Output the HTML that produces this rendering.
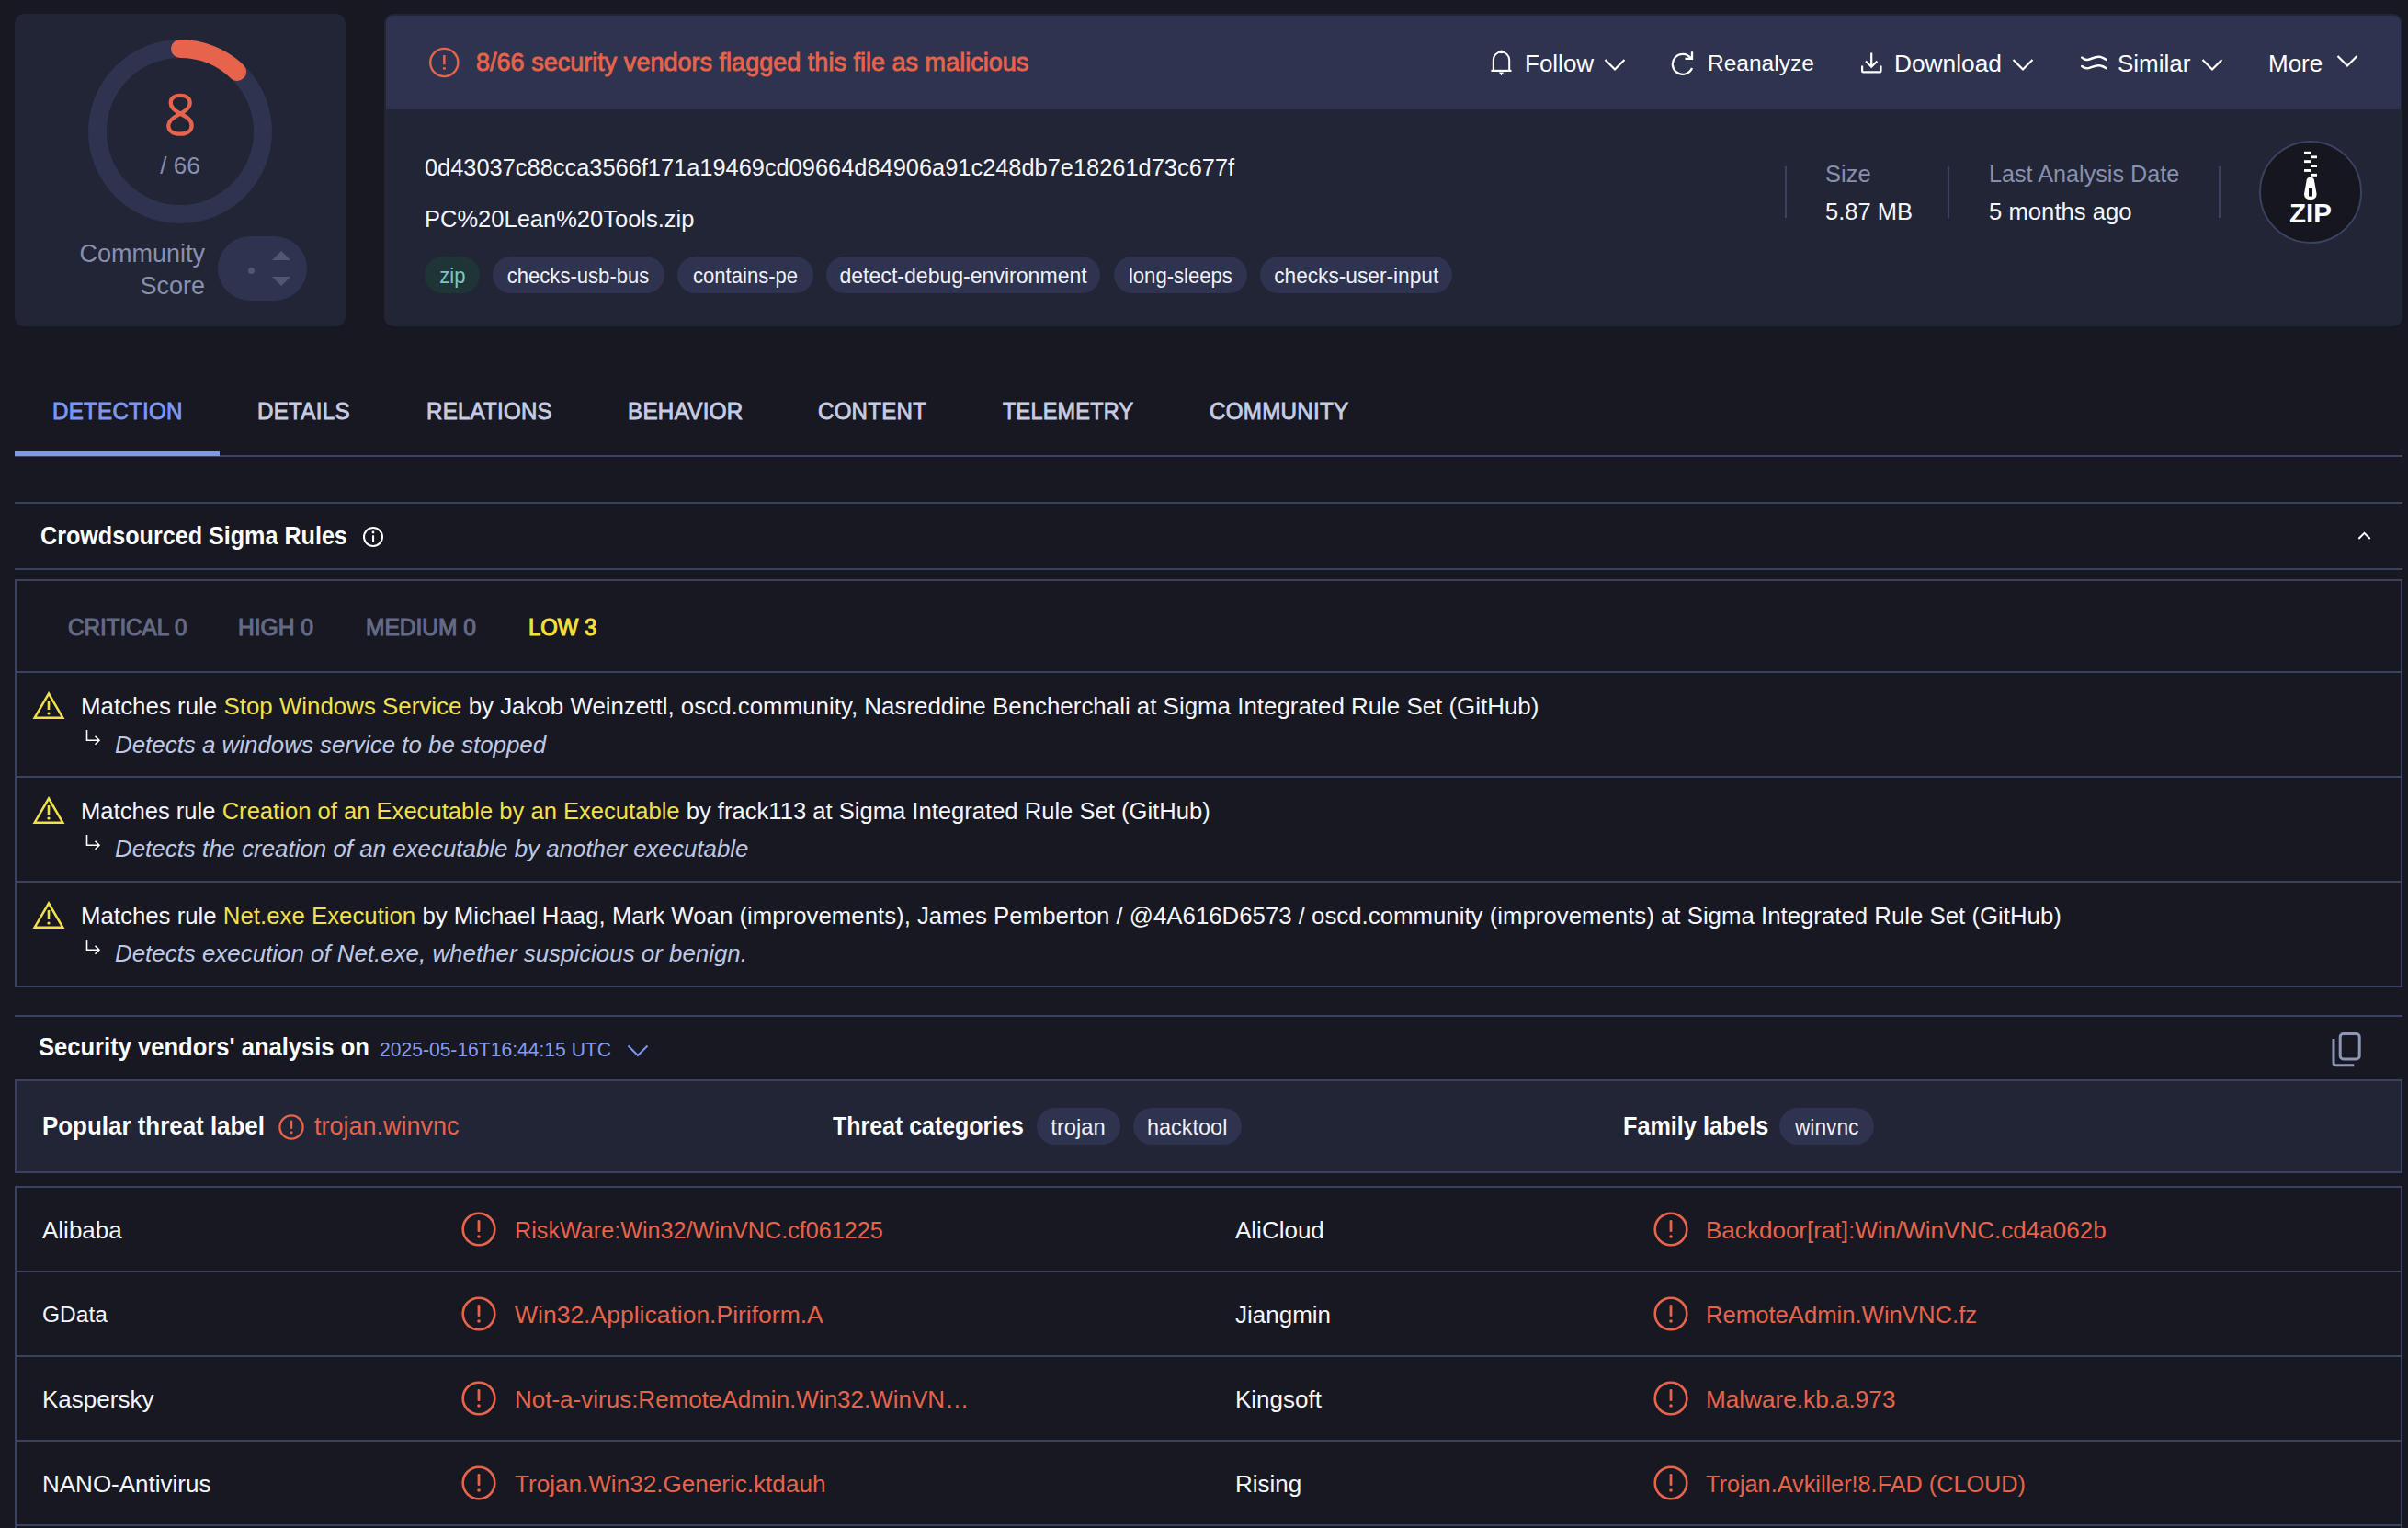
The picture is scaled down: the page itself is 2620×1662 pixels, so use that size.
<!DOCTYPE html>
<html><head><meta charset="utf-8">
<style>
*{box-sizing:border-box;margin:0;padding:0}
html,body{width:2620px;height:1662px;overflow:hidden;background:#181822}
body{position:relative;font-family:"Liberation Sans",sans-serif;color:#fff}
.a{position:absolute}
.t{position:absolute;white-space:nowrap;line-height:1}
.card{position:absolute;background:#212536;border-radius:10px}
.ln{position:absolute;background:#3b4160}
.pill span{display:inline-block;font-size:24px;transform:scaleX(0.92);transform-origin:50% 50%}
.pill{position:absolute;height:40px;border-radius:20px;background:#2e3350;color:#eef0f8;font-size:22px;line-height:40px;padding-top:1px;text-align:center;white-space:nowrap}
.or{color:#e5644b}
.gr{color:#8790ae}
.ye{color:#f2e04a}
.it{font-style:italic;color:#bec8e3}
.tab{position:absolute;top:433.6px;font-size:26.3px;font-weight:400;-webkit-text-stroke:0.9px currentColor;letter-spacing:0.3px;color:#c6cce2;line-height:1;white-space:nowrap;transform-origin:0 0}
.sev{position:absolute;top:669.8px;font-size:25.5px;font-weight:400;-webkit-text-stroke:1.1px currentColor;color:#646a84;line-height:1;white-space:nowrap;transform-origin:0 0}
</style></head><body>

<!-- left score card -->
<div class="card" style="left:16px;top:15px;width:360px;height:340px"></div>
<svg class="a" style="left:96px;top:43px" width="200" height="200" viewBox="0 0 200 200">
  <circle cx="100" cy="100" r="90" fill="none" stroke="#2e3350" stroke-width="20"/>
  <path d="M100 10 A90 90 0 0 1 162.1 34.9" fill="none" stroke="#e5644b" stroke-width="20" stroke-linecap="round"/>
</svg>
<svg class="a" style="left:176px;top:96px" width="40" height="56" viewBox="176 96 40 56">
  <path d="M196 123.5 C190 120.5 185.7 117.5 185.7 111.8 C185.7 106.3 190.3 103.8 196.1 103.8 C201.9 103.8 206.7 106.5 206.7 111.8 C206.7 116.3 203.5 119.6 199 122.1 C190.5 126.6 183.3 130.5 183.3 137 C183.3 142.6 188.6 145.7 196.1 145.7 C203.6 145.7 208.6 142.2 208.6 136.5 C208.6 130 202.3 126.6 196 123.5 Z" fill="none" stroke="#e5644b" stroke-width="4.3"/>
</svg>
<div class="t gr" style="left:96px;width:200px;text-align:center;top:167px;font-size:26px">/ 66</div>
<div class="t gr" style="left:60px;width:163px;text-align:right;top:258.5px;font-size:27px;line-height:35px">Community<br>Score</div>
<div class="a" style="left:237px;top:257px;width:97px;height:70px;border-radius:35px;background:#2e3350"></div>
<div class="a" style="left:270px;top:291px;width:7px;height:7px;border-radius:50%;background:#50576f"></div>
<svg class="a" style="left:294px;top:272px" width="24" height="40" viewBox="0 0 24 40">
  <path d="M2 11 L12 1 L22 11 Z" fill="#50576f"/><path d="M2 29 L12 39 L22 29 Z" fill="#50576f"/>
</svg>

<!-- right card -->
<div class="card" style="left:418px;top:15px;width:2196px;height:340px">
  <div class="a" style="left:2px;top:2px;width:2192px;height:102px;background:#2e3350;border-radius:8px 8px 0 0"></div>
</div>


<!-- banner content -->
<svg class="a" style="left:466px;top:51px" width="34" height="34" viewBox="0 0 34 34">
  <circle cx="17.3" cy="17" r="15.1" fill="none" stroke="#e5644b" stroke-width="2.4"/>
  <rect x="16.1" y="9" width="2.5" height="10.2" fill="#e5644b"/>
  <rect x="16" y="22.1" width="2.7" height="2.6" fill="#e5644b"/>
</svg>
<div class="t or" style="left:518px;top:55.0px;font-size:27.05px;-webkit-text-stroke:0.8px currentColor">8/66 security vendors flagged this file as malicious</div>

<!-- actions -->
<svg class="a" style="left:1620px;top:54px" width="28" height="30" viewBox="0 0 28 30">
  <path d="M4.8 22.6 L4.8 11.3 A8.7 8.7 0 0 1 22.2 11.3 L22.2 22.6" fill="none" stroke="#fff" stroke-width="2"/>
  <path d="M2.4 22.9 L24.5 22.9" fill="none" stroke="#fff" stroke-width="2.2"/>
  <circle cx="13.5" cy="2.3" r="1.9" fill="#fff"/>
  <path d="M10.8 24.5 L16.2 24.5 L13.5 28.3 Z" fill="#fff"/>
</svg>
<div class="t" style="left:1659px;top:55.9px;font-size:26px">Follow</div>
<svg class="a" style="left:1745px;top:63px" width="24" height="15" viewBox="0 0 24 15"><path d="M1.5 2 L12 12.5 L22.5 2" fill="none" stroke="#fff" stroke-width="2.2"/></svg>

<svg class="a" style="left:1816px;top:55px" width="30" height="28" viewBox="0 0 30 28">
  <path d="M23.5 8 A11 11 0 1 0 25 19" fill="none" stroke="#fff" stroke-width="2.3"/>
  <path d="M17.5 8.8 L25 8.8 L25 1.3" fill="none" stroke="#fff" stroke-width="2.3"/>
</svg>
<div class="t" style="left:1858px;top:57.2px;font-size:24.5px">Reanalyze</div>

<svg class="a" style="left:2023px;top:55px" width="28" height="28" viewBox="0 0 28 28">
  <path d="M13.2 2.5 L13.2 17.5 M7 11.5 L13.2 17.7 L19.4 11.5" fill="none" stroke="#fff" stroke-width="2.2"/>
  <path d="M3.1 16.5 L3.1 22.2 Q3.1 23.4 4.3 23.4 L22.3 23.4 Q23.5 23.4 23.5 22.2 L23.5 16.5" fill="none" stroke="#fff" stroke-width="2.2"/>
</svg>
<div class="t" style="left:2061px;top:55.6px;font-size:26.3px">Download</div>
<svg class="a" style="left:2189px;top:63px" width="24" height="15" viewBox="0 0 24 15"><path d="M1.5 2 L12 12.5 L22.5 2" fill="none" stroke="#fff" stroke-width="2.2"/></svg>

<svg class="a" style="left:2263px;top:57px" width="32" height="22" viewBox="0 0 32 22">
  <path d="M2.3 5.6 C4.6 7.9 7 8.3 9.5 7.7 C13 6.9 16 4.7 20.5 4.8 C24 4.9 26.5 6.5 28.6 7.9" fill="none" stroke="#fff" stroke-width="2.5" stroke-linecap="round"/>
  <path d="M2.3 15 C4.6 17.3 7 17.7 9.5 17.1 C13 16.3 16 14.1 20.5 14.2 C24 14.3 26.5 15.9 28.6 17.3" fill="none" stroke="#fff" stroke-width="2.5" stroke-linecap="round"/>
</svg>
<div class="t" style="left:2304px;top:55.9px;font-size:26px">Similar</div>
<svg class="a" style="left:2395px;top:63px" width="24" height="15" viewBox="0 0 24 15"><path d="M1.5 2 L12 12.5 L22.5 2" fill="none" stroke="#fff" stroke-width="2.2"/></svg>

<div class="t" style="left:2468px;top:55.9px;font-size:26px">More</div>
<svg class="a" style="left:2542px;top:59px" width="24" height="15" viewBox="0 0 24 15"><path d="M1.5 2 L12 12.5 L22.5 2" fill="none" stroke="#fff" stroke-width="2.2"/></svg>

<!-- hash / name -->
<div class="t" style="left:462px;top:170px;font-size:25.4px;color:#f4f5fa">0d43037c88cca3566f171a19469cd09664d84906a91c248db7e18261d73c677f</div>
<div class="t" style="left:462px;top:226px;font-size:25.5px;color:#f4f5fa">PC%20Lean%20Tools.zip</div>

<!-- tags -->
<div class="pill" style="left:462px;top:279px;width:60px;background:#1f3434;color:#7cc4c8"><span>zip</span></div>
<div class="pill" style="left:536px;top:279px;width:187px"><span>checks-usb-bus</span></div>
<div class="pill" style="left:737px;top:279px;width:148px"><span>contains-pe</span></div>
<div class="pill" style="left:899px;top:279px;width:298px"><span style="transform:scaleX(0.961)">detect-debug-environment</span></div>
<div class="pill" style="left:1212px;top:279px;width:145px"><span>long-sleeps</span></div>
<div class="pill" style="left:1371px;top:279px;width:209px"><span style="transform:scaleX(0.945)">checks-user-input</span></div>

<!-- meta -->
<div class="ln" style="left:1942px;top:181px;width:2px;height:56px"></div>
<div class="t gr" style="left:1986px;top:177px;font-size:25.5px">Size</div>
<div class="t" style="left:1986px;top:218px;font-size:25.5px;color:#f4f5fa">5.87 MB</div>
<div class="ln" style="left:2119px;top:181px;width:2px;height:56px"></div>
<div class="t gr" style="left:2164px;top:177px;font-size:25.2px">Last Analysis Date</div>
<div class="t" style="left:2164px;top:218px;font-size:25.7px;color:#f4f5fa">5 months ago</div>
<div class="ln" style="left:2414px;top:181px;width:2px;height:56px"></div>
<div class="a" style="left:2458px;top:153px;width:112px;height:112px;border-radius:50%;background:#16161f;border:2px solid #3a4262"></div>
<svg class="a" style="left:2500px;top:160px" width="28" height="58" viewBox="0 0 28 58">
  <g fill="#fff">
   <rect x="7" y="4.8" width="7" height="2.4"/><rect x="14" y="9.4" width="7" height="2.8"/>
   <rect x="7" y="14.2" width="7" height="2.9"/><rect x="14" y="19.1" width="7" height="2.9"/>
   <rect x="7" y="24" width="7" height="2.9"/><rect x="14" y="28.9" width="7" height="2.9"/>
  </g>
  <path d="M9.4 37.6 Q9.4 32.7 13.8 32.7 Q18.2 32.7 18.2 37.6 L20.6 51 Q20.6 57 13.8 57 Q7 57 7 51 Z" fill="#fff"/>
  <rect x="12" y="44.6" width="4" height="9" fill="#16161f"/>
</svg>
<div class="t" style="left:2458px;top:217.3px;width:112px;text-align:center;font-size:29.5px;font-weight:700">ZIP</div>


<!-- tabs -->
<div class="tab" style="left:57.0px;color:#7d97f2;transform:scaleX(0.917)">DETECTION</div>
<div class="tab" style="left:280.1px;transform:scaleX(0.919)">DETAILS</div>
<div class="tab" style="left:463.5px;transform:scaleX(0.914)">RELATIONS</div>
<div class="tab" style="left:682.5px;transform:scaleX(0.921)">BEHAVIOR</div>
<div class="tab" style="left:890.3px;transform:scaleX(0.914)">CONTENT</div>
<div class="tab" style="left:1090.9px;transform:scaleX(0.89)">TELEMETRY</div>
<div class="tab" style="left:1316.0px;transform:scaleX(0.919)">COMMUNITY</div>
<div class="ln" style="left:16px;top:495px;width:2598px;height:2px"></div>
<div class="a" style="left:16px;top:491px;width:223px;height:5px;background:#7d97f2"></div>

<!-- sigma header -->
<div class="ln" style="left:16px;top:546px;width:2598px;height:2px"></div>
<div class="t" style="left:44px;top:570.0px;font-size:27px;font-weight:700;transform:scaleX(0.931);transform-origin:0 0">Crowdsourced Sigma Rules</div>
<svg class="a" style="left:394px;top:572px" width="24" height="24" viewBox="0 0 24 24">
  <circle cx="12" cy="12" r="10" fill="none" stroke="#fff" stroke-width="2"/>
  <rect x="11" y="10.3" width="2.1" height="7.5" fill="#fff"/><circle cx="12" cy="7" r="1.4" fill="#fff"/>
</svg>
<svg class="a" style="left:2563px;top:575px" width="18" height="14" viewBox="0 0 18 14"><path d="M3.3 11 L9.5 4.8 L15.7 11" fill="none" stroke="#fff" stroke-width="1.9"/></svg>
<div class="ln" style="left:16px;top:618px;width:2598px;height:2px"></div>

<!-- sigma box -->
<div class="a" style="left:16px;top:630px;width:2598px;height:444px;border:2px solid #3b4160"></div>
<div class="sev" style="left:74px;transform:scaleX(0.948)">CRITICAL 0</div>
<div class="sev" style="left:259px;transform:scaleX(0.964)">HIGH 0</div>
<div class="sev" style="left:398px;transform:scaleX(0.962)">MEDIUM 0</div>
<div class="sev" style="left:575px;color:#f5e03c;transform:scaleX(0.936)">LOW 3</div>
<div class="ln" style="left:16px;top:730px;width:2598px;height:2px"></div>
<div class="ln" style="left:16px;top:844px;width:2598px;height:2px"></div>
<div class="ln" style="left:16px;top:958px;width:2598px;height:2px"></div>

<svg class="a" style="left:35px;top:751.4px" width="36" height="32" viewBox="0 0 36 32">
  <path d="M18 3.5 L33.3 29.7 L2.7 29.7 Z" fill="none" stroke="#f2e04a" stroke-width="2.5" stroke-linejoin="miter"/>
  <rect x="16.7" y="11" width="2.6" height="10" fill="#f2e04a"/><circle cx="18" cy="25" r="1.6" fill="#f2e04a"/>
</svg>
<div class="t" style="left:88px;top:756.4px;font-size:25.9px;color:#f4f5fa">Matches rule <span class="ye">Stop Windows Service</span> by Jakob Weinzettl, oscd.community, Nasreddine Bencherchali at Sigma Integrated Rule Set (GitHub)</div>
<svg class="a" style="left:92px;top:793.4px" width="20" height="20" viewBox="0 0 20 20"><path d="M2.5 1 L2.5 12.2 L16 12.2 M11.5 7.7 L16 12.2 L11.5 16.7" fill="none" stroke="#fff" stroke-width="1.6"/></svg>
<div class="t it" style="left:125px;top:797.7px;font-size:25.9px">Detects a windows service to be stopped</div>
<svg class="a" style="left:35px;top:865.0px" width="36" height="32" viewBox="0 0 36 32">
  <path d="M18 3.5 L33.3 29.7 L2.7 29.7 Z" fill="none" stroke="#f2e04a" stroke-width="2.5" stroke-linejoin="miter"/>
  <rect x="16.7" y="11" width="2.6" height="10" fill="#f2e04a"/><circle cx="18" cy="25" r="1.6" fill="#f2e04a"/>
</svg>
<div class="t" style="left:88px;top:870.2px;font-size:25.6px;color:#f4f5fa">Matches rule <span class="ye">Creation of an Executable by an Executable</span> by frack113 at Sigma Integrated Rule Set (GitHub)</div>
<svg class="a" style="left:92px;top:907.0px" width="20" height="20" viewBox="0 0 20 20"><path d="M2.5 1 L2.5 12.2 L16 12.2 M11.5 7.7 L16 12.2 L11.5 16.7" fill="none" stroke="#fff" stroke-width="1.6"/></svg>
<div class="t it" style="left:125px;top:911.3px;font-size:25.9px">Detects the creation of an executable by another executable</div>
<svg class="a" style="left:35px;top:979.0px" width="36" height="32" viewBox="0 0 36 32">
  <path d="M18 3.5 L33.3 29.7 L2.7 29.7 Z" fill="none" stroke="#f2e04a" stroke-width="2.5" stroke-linejoin="miter"/>
  <rect x="16.7" y="11" width="2.6" height="10" fill="#f2e04a"/><circle cx="18" cy="25" r="1.6" fill="#f2e04a"/>
</svg>
<div class="t" style="left:88px;top:984.1px;font-size:25.8px;color:#f4f5fa">Matches rule <span class="ye">Net.exe Execution</span> by Michael Haag, Mark Woan (improvements), James Pemberton / @4A616D6573 / oscd.community (improvements) at Sigma Integrated Rule Set (GitHub)</div>
<svg class="a" style="left:92px;top:1021.0px" width="20" height="20" viewBox="0 0 20 20"><path d="M2.5 1 L2.5 12.2 L16 12.2 M11.5 7.7 L16 12.2 L11.5 16.7" fill="none" stroke="#fff" stroke-width="1.6"/></svg>
<div class="t it" style="left:125px;top:1025.3px;font-size:25.9px">Detects execution of Net.exe, whether suspicious or benign.</div>



<!-- vendors header -->
<div class="ln" style="left:16px;top:1104px;width:2598px;height:2px"></div>
<div class="t" style="left:42px;top:1126.0px;font-size:27px;font-weight:700;transform:scaleX(0.947);transform-origin:0 0">Security vendors' analysis on</div>
<div class="t" style="left:413px;top:1130.9px;font-size:22.5px;color:#859cf0;transform:scaleX(0.937);transform-origin:0 0">2025-05-16T16:44:15 UTC</div>
<svg class="a" style="left:682px;top:1135px" width="24" height="16" viewBox="0 0 24 16"><path d="M1.5 2.5 L12 13 L22.5 2.5" fill="none" stroke="#7d97f2" stroke-width="2"/></svg>
<svg class="a" style="left:2535px;top:1121px" width="36" height="42" viewBox="0 0 36 42">
  <rect x="11.2" y="3.5" width="21" height="27.5" rx="3.5" fill="none" stroke="#8c96b6" stroke-width="3"/>
  <path d="M4 9 L4 35 Q4 37.8 6.8 37.8 L26.3 37.8" fill="none" stroke="#8c96b6" stroke-width="3"/>
</svg>

<!-- threat labels box -->
<div class="a" style="left:16px;top:1174px;width:2598px;height:102px;background:#212536;border:2px solid #3b4160"></div>
<div class="t" style="left:46px;top:1212.0px;font-size:27px;font-weight:700;transform:scaleX(0.96);transform-origin:0 0">Popular threat label</div>
<svg class="a" style="left:302px;top:1211px" width="30" height="30" viewBox="0 0 30 30">
  <circle cx="15" cy="15" r="12.6" fill="none" stroke="#e5644b" stroke-width="2.3"/>
  <rect x="13.9" y="7.5" width="2.3" height="9.5" rx="1" fill="#e5644b"/><circle cx="15" cy="20.8" r="1.5" fill="#e5644b"/>
</svg>
<div class="t or" style="left:342px;top:1212px;font-size:27px">trojan.winvnc</div>
<div class="t" style="left:906px;top:1212.0px;font-size:27px;font-weight:700;transform:scaleX(0.924);transform-origin:0 0">Threat categories</div>
<div class="pill" style="left:1128px;top:1205px;width:91px"><span style="transform:scaleX(0.99)">trojan</span></div>
<div class="pill" style="left:1233px;top:1205px;width:118px"><span style="transform:scaleX(0.977)">hacktool</span></div>
<div class="t" style="left:1766px;top:1212.0px;font-size:27px;font-weight:700;transform:scaleX(0.934);transform-origin:0 0">Family labels</div>
<div class="pill" style="left:1936px;top:1205px;width:103px"><span style="transform:scaleX(0.947)">winvnc</span></div>

<!-- vendors table -->
<div class="a" style="left:16px;top:1290px;width:2598px;height:400px;border:2px solid #3b4160"></div>
<div class="t" style="left:46px;top:1324.9px;font-size:26px;color:#f4f5fa">Alibaba</div>
<svg class="a" style="left:501px;top:1317.0px" width="40" height="40" viewBox="0 0 40 40">
  <circle cx="20" cy="20" r="17.3" fill="none" stroke="#e5644b" stroke-width="2.6"/>
  <rect x="18.6" y="10" width="2.8" height="13" rx="1.2" fill="#e5644b"/><circle cx="20" cy="28" r="1.8" fill="#e5644b"/>
</svg>
<div class="t or" style="left:560px;top:1326.0px;font-size:25.2px">RiskWare:Win32/WinVNC.cf061225</div>
<div class="t" style="left:1344px;top:1324.9px;font-size:26px;color:#f4f5fa">AliCloud</div>
<svg class="a" style="left:1798px;top:1317.0px" width="40" height="40" viewBox="0 0 40 40">
  <circle cx="20" cy="20" r="17.3" fill="none" stroke="#e5644b" stroke-width="2.6"/>
  <rect x="18.6" y="10" width="2.8" height="13" rx="1.2" fill="#e5644b"/><circle cx="20" cy="28" r="1.8" fill="#e5644b"/>
</svg>
<div class="t or" style="left:1856px;top:1325.3px;font-size:26.05px">Backdoor[rat]:Win/WinVNC.cd4a062b</div>
<div class="ln" style="left:16px;top:1382px;width:2598px;height:2px"></div>
<div class="t" style="left:46px;top:1418.2px;font-size:24.5px;color:#f4f5fa">GData</div>
<svg class="a" style="left:501px;top:1409.0px" width="40" height="40" viewBox="0 0 40 40">
  <circle cx="20" cy="20" r="17.3" fill="none" stroke="#e5644b" stroke-width="2.6"/>
  <rect x="18.6" y="10" width="2.8" height="13" rx="1.2" fill="#e5644b"/><circle cx="20" cy="28" r="1.8" fill="#e5644b"/>
</svg>
<div class="t or" style="left:560px;top:1416.9px;font-size:26.5px">Win32.Application.Piriform.A</div>
<div class="t" style="left:1344px;top:1416.9px;font-size:26px;color:#f4f5fa">Jiangmin</div>
<svg class="a" style="left:1798px;top:1409.0px" width="40" height="40" viewBox="0 0 40 40">
  <circle cx="20" cy="20" r="17.3" fill="none" stroke="#e5644b" stroke-width="2.6"/>
  <rect x="18.6" y="10" width="2.8" height="13" rx="1.2" fill="#e5644b"/><circle cx="20" cy="28" r="1.8" fill="#e5644b"/>
</svg>
<div class="t or" style="left:1856px;top:1417.6px;font-size:25.66px">RemoteAdmin.WinVNC.fz</div>
<div class="ln" style="left:16px;top:1474px;width:2598px;height:2px"></div>
<div class="t" style="left:46px;top:1508.9px;font-size:26px;color:#f4f5fa">Kaspersky</div>
<svg class="a" style="left:501px;top:1501.0px" width="40" height="40" viewBox="0 0 40 40">
  <circle cx="20" cy="20" r="17.3" fill="none" stroke="#e5644b" stroke-width="2.6"/>
  <rect x="18.6" y="10" width="2.8" height="13" rx="1.2" fill="#e5644b"/><circle cx="20" cy="28" r="1.8" fill="#e5644b"/>
</svg>
<div class="t or" style="left:560px;top:1509.3px;font-size:26.0px">Not-a-virus:RemoteAdmin.Win32.WinVN…</div>
<div class="t" style="left:1344px;top:1508.9px;font-size:26px;color:#f4f5fa">Kingsoft</div>
<svg class="a" style="left:1798px;top:1501.0px" width="40" height="40" viewBox="0 0 40 40">
  <circle cx="20" cy="20" r="17.3" fill="none" stroke="#e5644b" stroke-width="2.6"/>
  <rect x="18.6" y="10" width="2.8" height="13" rx="1.2" fill="#e5644b"/><circle cx="20" cy="28" r="1.8" fill="#e5644b"/>
</svg>
<div class="t or" style="left:1856px;top:1509.2px;font-size:26.16px">Malware.kb.a.973</div>
<div class="ln" style="left:16px;top:1566px;width:2598px;height:2px"></div>
<div class="t" style="left:46px;top:1600.9px;font-size:26px;color:#f4f5fa">NANO-Antivirus</div>
<svg class="a" style="left:501px;top:1593.0px" width="40" height="40" viewBox="0 0 40 40">
  <circle cx="20" cy="20" r="17.3" fill="none" stroke="#e5644b" stroke-width="2.6"/>
  <rect x="18.6" y="10" width="2.8" height="13" rx="1.2" fill="#e5644b"/><circle cx="20" cy="28" r="1.8" fill="#e5644b"/>
</svg>
<div class="t or" style="left:560px;top:1601.2px;font-size:26.1px">Trojan.Win32.Generic.ktdauh</div>
<div class="t" style="left:1344px;top:1600.9px;font-size:26px;color:#f4f5fa">Rising</div>
<svg class="a" style="left:1798px;top:1593.0px" width="40" height="40" viewBox="0 0 40 40">
  <circle cx="20" cy="20" r="17.3" fill="none" stroke="#e5644b" stroke-width="2.6"/>
  <rect x="18.6" y="10" width="2.8" height="13" rx="1.2" fill="#e5644b"/><circle cx="20" cy="28" r="1.8" fill="#e5644b"/>
</svg>
<div class="t or" style="left:1856px;top:1602.0px;font-size:25.26px">Trojan.Avkiller!8.FAD (CLOUD)</div>
<div class="ln" style="left:16px;top:1658px;width:2598px;height:2px"></div>


</body></html>
